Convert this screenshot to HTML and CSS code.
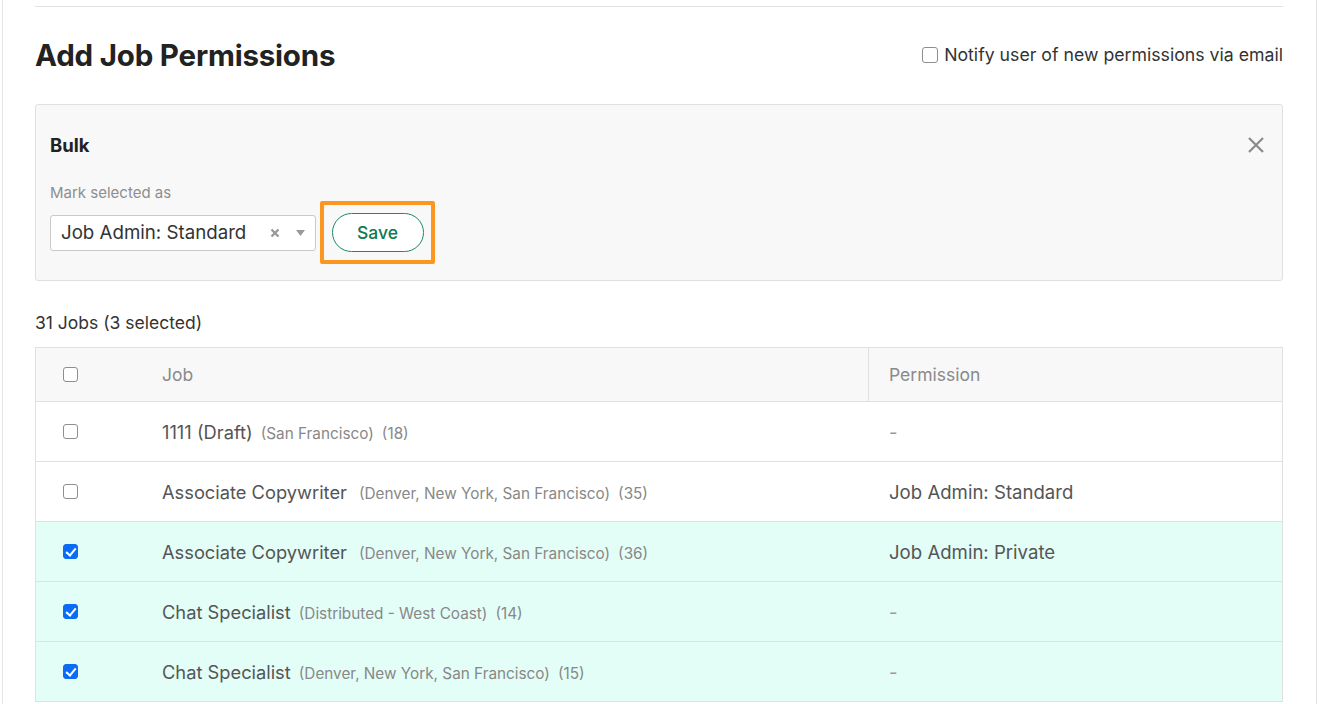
FILE: index.html
```html
<!DOCTYPE html>
<html>
<head>
<meta charset="utf-8">
<link rel="stylesheet" href="styles.css">
</head>
<body>
<div class="panel">
  <div class="inner">
    <div class="topline"></div>
    <div class="head">
      <h1 class="title">Add Job Permissions</h1>
      <label class="notify"><span class="cb"></span>Notify user of new permissions via email</label>
    </div>
    <div class="bulk">
      <div class="bulk-head">
        <div class="bulk-title">Bulk</div>
        <svg class="close" width="18" height="18" viewBox="0 0 18 18"><path d="M2 2L16 16M16 2L2 16" stroke="#8a8a8a" stroke-width="2.2" fill="none"/></svg>
      </div>
      <div class="mark-label">Mark selected as</div>
      <div class="bulk-row">
        <div class="select">
          <span class="select-val">Job Admin: Standard</span>
          <svg class="clear" width="10" height="10" viewBox="0 0 10 10"><path d="M1.5 1.5L8.5 8.5M8.5 1.5L1.5 8.5" stroke="#999" stroke-width="2.4" fill="none"/></svg>
          <svg class="arrow" width="9" height="6" viewBox="0 0 9 6"><path d="M0 0H9L4.5 6Z" fill="#999"/></svg>
        </div>
        <div class="highlight"><button class="save">Save</button></div>
      </div>
    </div>
    <div class="count">31 Jobs (3 selected)</div>
    <div class="table">
      <div class="row header">
        <div class="c-check"><span class="cb"></span></div>
        <div class="c-job">Job</div>
        <div class="c-perm">Permission</div>
      </div>
      <div class="row">
        <div class="c-check"><span class="cb"></span></div>
        <div class="c-job"><div class="line"><span class="jt">1111 (Draft)</span><span class="loc">(San Francisco)</span><span class="num">(18)</span></div></div>
        <div class="c-perm dash">-</div>
      </div>
      <div class="row">
        <div class="c-check"><span class="cb"></span></div>
        <div class="c-job"><div class="line"><span class="jt">Associate Copywriter</span><span class="loc wide">(Denver, New York, San Francisco)</span><span class="num">(35)</span></div></div>
        <div class="c-perm">Job Admin: Standard</div>
      </div>
      <div class="row sel">
        <div class="c-check"><span class="cb on"></span></div>
        <div class="c-job"><div class="line"><span class="jt">Associate Copywriter</span><span class="loc wide">(Denver, New York, San Francisco)</span><span class="num">(36)</span></div></div>
        <div class="c-perm">Job Admin: Private</div>
      </div>
      <div class="row sel">
        <div class="c-check"><span class="cb on"></span></div>
        <div class="c-job"><div class="line"><span class="jt">Chat Specialist</span><span class="loc">(Distributed - West Coast)</span><span class="num">(14)</span></div></div>
        <div class="c-perm dash">-</div>
      </div>
      <div class="row sel">
        <div class="c-check"><span class="cb on"></span></div>
        <div class="c-job"><div class="line"><span class="jt">Chat Specialist</span><span class="loc">(Denver, New York, San Francisco)</span><span class="num">(15)</span></div></div>
        <div class="c-perm dash">-</div>
      </div>
    </div>
  </div>
</div>
</body>
</html>
```
FILE: styles.css
```css
html, body {
  margin: 0;
  padding: 0;
  background: #ffffff;
  font-family: "Inter", "Liberation Sans", sans-serif;
  color: #333;
  overflow: hidden;
}
.panel {
  margin-left: 2px;
  width: 1315px;
  height: 704px;
  border-left: 1px solid #e4e4e4;
  border-right: 1px solid #e4e4e4;
  box-sizing: border-box;
}
.inner {
  padding: 6px 33px 0 32px;
}
.topline {
  height: 1px;
  background: #e2e2e2;
}
.head {
  display: flex;
  justify-content: space-between;
  align-items: center;
  height: 97px;
}
.title {
  margin: 0;
  font-size: 29.5px;
  font-weight: 700;
  color: #222;
  letter-spacing: -0.2px;
  position: relative;
  top: -1px;
}
.notify {
  display: flex;
  align-items: center;
  font-size: 17.7px;
  color: #333;
  position: relative;
  top: -1px;
}
.notify .cb { margin-right: 6px; width: 16px; height: 16px; }
.cb {
  display: inline-block;
  width: 15px;
  height: 15px;
  box-sizing: border-box;
  border: 1.5px solid #8d8d93;
  border-radius: 3px;
  background: #fff;
  position: relative;
}
.cb.on {
  background: #0a6cf5;
  border-color: #0a6cf5;
}
.cb.on::after {
  content: "";
  position: absolute;
  left: 3.5px;
  top: 0.5px;
  width: 4px;
  height: 8px;
  border-right: 2.5px solid #fff;
  border-bottom: 2.5px solid #fff;
  transform: rotate(40deg);
}
.bulk {
  background: #f8f8f8;
  border: 1px solid #e0e0e0;
  border-radius: 3px;
  height: 177px;
  box-sizing: border-box;
  padding: 0 14px;
}
.bulk-head {
  display: flex;
  justify-content: space-between;
  align-items: center;
  height: 78px;
}
.bulk-title {
  font-size: 18.5px;
  font-weight: 700;
  color: #222;
  position: relative;
  top: 1px;
}
.close { margin-right: 3px; position: relative; top: 1px; }
.mark-label {
  font-size: 15px;
  color: #8e8e8e;
  height: 20px;
}
.bulk-row {
  display: flex;
  align-items: center;
  margin-top: -2px;
}
.select {
  width: 266px;
  height: 36px;
  box-sizing: border-box;
  background: #fff;
  border: 1px solid #c9c9c9;
  border-radius: 3px;
  display: flex;
  align-items: center;
  padding: 0 10px 0 10px;
}
.select-val {
  font-size: 18.7px;
  color: #333;
  flex: 1;
}
.clear { margin-right: 16px; }
.highlight {
  margin-left: 4px;
  width: 115px;
  height: 63px;
  box-sizing: border-box;
  border: 4px solid #fb9620;
  border-radius: 2px;
  display: flex;
  align-items: center;
  justify-content: center;
}
.save {
  width: 92px;
  height: 39px;
  border: 1px solid #1e8a63;
  border-radius: 20px;
  background: #fff;
  color: #0f7a52;
  font-family: "Inter", "Liberation Sans", sans-serif;
  font-size: 17.5px;
  font-weight: 500;
  padding: 0;
}
.count {
  font-size: 17.5px;
  color: #333;
  margin-top: 31px;
  height: 35px;
}
.table {
  border: 1px solid #e0e0e0;
  border-bottom: none;
}
.row {
  display: flex;
  height: 60px;
  box-sizing: border-box;
  border-bottom: 1px solid #e0e0e0;
  align-items: stretch;
}
.row.header {
  height: 54px;
  background: #f8f8f8;
}
.row.sel {
  background: #e3fdf7;
}
.c-check {
  width: 126px;
  padding-left: 27px;
  box-sizing: border-box;
  display: flex;
  align-items: center;
}
.c-job {
  width: 706px;
  display: flex;
  align-items: center;
  border-right: 1px solid #e0e0e0;
  font-size: 18px;
  color: #555;
}
.header .c-job, .header .c-perm {
  color: #8a8a8a;
  font-size: 17.5px;
}
.c-perm {
  flex: 1;
  display: flex;
  align-items: center;
  padding-left: 20px;
  font-size: 18.6px;
  color: #555;
}
.row:not(.header) .c-job { border-right: none; }
.row:not(.header) .c-perm { padding-left: 21px; }
.dash { color: #999; }
.line { white-space: nowrap; }
.jt {
  font-size: 18.3px;
  color: #555;
  margin-right: 8px;
}
.loc, .num {
  font-size: 15.3px;
  color: #888;
}
.loc.wide { margin-left: 4px; }
.num { margin-left: 8px; }
```
